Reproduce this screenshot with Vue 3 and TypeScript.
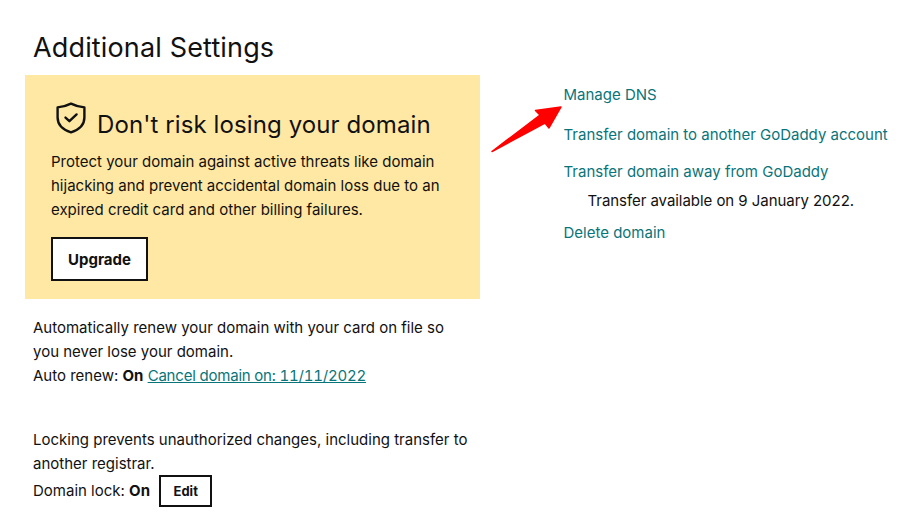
<script setup lang="ts">
const links = ['Transfer domain to another GoDaddy account']
</script>

<template>
  <main class="page">
    <h1 class="title">Additional Settings</h1>
    <div class="columns">
      <section class="left">
        <article class="promo">
          <h2 class="promo-title">
            <svg class="shield" viewBox="0 0 30 32" width="30" height="32" fill="none" stroke="#111" stroke-width="2.4" stroke-linejoin="round" stroke-linecap="round">
              <path d="M15 1.6C19 3.6 23.5 5 28.4 5.4V15.5C28.4 22.5 23 27.8 15 30.4C7 27.8 1.6 22.5 1.6 15.5V5.4C6.5 5 11 3.6 15 1.6Z" />
              <path d="M9.5 15.6L13.4 19.2L20.6 12.4" />
            </svg>
            <span>Don't risk losing your domain</span>
          </h2>
          <p class="promo-text">
            Protect your domain against active threats like domain
            hijacking and prevent accidental domain loss due to an
            expired credit card and other billing failures.
          </p>
          <button class="btn upgrade">Upgrade</button>
        </article>

        <div class="setting renew">
          <p>Automatically renew your domain with your card on file so you never lose your domain.</p>
          <p>Auto renew: <strong>On</strong> <a class="link underline" href="#">Cancel domain on: 11/11/2022</a></p>
        </div>

        <div class="setting lock">
          <p>Locking prevents unauthorized changes, including transfer to another registrar.</p>
          <p class="lock-row">Domain lock: <strong>On</strong> <button class="btn edit">Edit</button></p>
        </div>
      </section>

      <nav class="right">
        <a class="link manage" href="#">Manage DNS</a>
        <a v-for="l in links" :key="l" class="link transfer" href="#">{{ l }}</a>
        <a class="link away" href="#">Transfer domain away from GoDaddy</a>
        <span class="avail">Transfer available on 9 January 2022.</span>
        <a class="link delete" href="#">Delete domain</a>
      </nav>
    </div>

    <svg class="arrow" width="72" height="50" viewBox="0 0 72 50">
      <path d="M1 47.500L49 11L44.500 6.500L70 3L58 24L54 19Z" fill="#f00" stroke="#f00" stroke-width="1.500" stroke-linejoin="round" />
    </svg>
  </main>
</template>

<style>
html, body {
  margin: 0;
  background: #fff;
}
</style>

<style scoped>
.page {
  position: relative;
  width: 924px;
  height: 526px;
  overflow: hidden;
  box-sizing: border-box;
  padding-top: 31px;
  color: #111;
  font-family: Inter, "Noto Sans", sans-serif;
  font-size: 15px;
  line-height: 24px;
}

.title {
  margin: 0 0 10px 33px;
  font-size: 27px;
  font-weight: 400;
  letter-spacing: 0.15px;
  line-height: 34px;
}

.columns {
  display: flex;
  padding-left: 25px;
}

.left {
  width: 455px;
  flex: none;
}

.promo {
  height: 224px;
  box-sizing: border-box;
  padding: 27px 26px 0;
  background: #ffe8a3;
}

.promo-title {
  display: flex;
  align-items: flex-end;
  gap: 11px;
  margin: 0 0 8px 5px;
  font-size: 24px;
  font-weight: 400;
  letter-spacing: 0.1px;
  line-height: 34px;
}

.shield {
  margin-bottom: 8px;
}

.promo-text {
  margin: 0 0 15px;
}

.btn {
  box-sizing: border-box;
  border: 2px solid #111;
  background: #fff;
  color: #111;
  font-family: inherit;
  font-weight: 700;
  padding: 0;
}

.upgrade {
  width: 97px;
  height: 44px;
  font-size: 15px;
}

.setting {
  width: 420px;
  padding-left: 8px;
}

.setting p {
  margin: 0;
}

.renew {
  margin-top: 17px;
}

.lock {
  width: 440px;
  margin-top: 40px;
}

.setting .lock-row {
  margin-top: -1px;
}

.edit {
  width: 53px;
  height: 32px;
  margin: 0 0 2px 5px;
  font-size: 13px;
  vertical-align: middle;
}

.right {
  display: flex;
  flex-direction: column;
  align-items: flex-start;
  padding: 8px 0 0 83.5px;
}

.link {
  color: #09757a;
  text-decoration: none;
}

.link.underline {
  font-variant-numeric: tabular-nums;
  letter-spacing: -0.2px;
  text-decoration: underline;
}

.transfer {
  margin-top: 16px;
}

.away {
  margin-top: 13px;
}

.avail {
  margin: 5px 0 8px 24px;
  letter-spacing: -0.05px;
}

.arrow {
  position: absolute;
  left: 491px;
  top: 104px;
}
</style>
